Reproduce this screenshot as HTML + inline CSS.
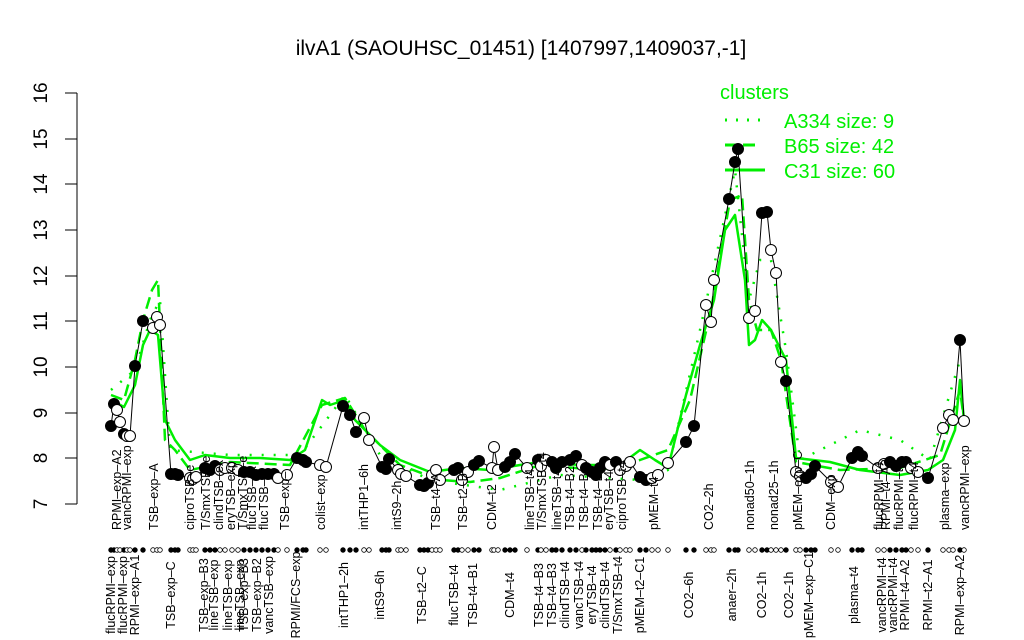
<!DOCTYPE html>
<html><head><meta charset="utf-8"><style>
html,body{margin:0;padding:0;background:#fff;}
svg{display:block;font-family:"Liberation Sans",sans-serif;}
.lb{font-size:12.5px;fill:#000;}
</style></head><body>
<svg id="s" width="1024" height="640" viewBox="0 0 1024 640" xmlns="http://www.w3.org/2000/svg">
<text x="521" y="55" font-size="21" text-anchor="middle">ilvA1 (SAOUHSC_01451) [1407997,1409037,-1]</text>
<g stroke="#000" stroke-width="1">
<line x1="77" y1="93" x2="77" y2="504"/>
<line x1="65" y1="93" x2="77" y2="93"/><line x1="65" y1="139" x2="77" y2="139"/>
<line x1="65" y1="184" x2="77" y2="184"/><line x1="65" y1="230" x2="77" y2="230"/>
<line x1="65" y1="276" x2="77" y2="276"/><line x1="65" y1="321" x2="77" y2="321"/>
<line x1="65" y1="367" x2="77" y2="367"/><line x1="65" y1="413" x2="77" y2="413"/>
<line x1="65" y1="458" x2="77" y2="458"/><line x1="65" y1="504" x2="77" y2="504"/>
</g>
<g font-size="19" text-anchor="middle">
<text transform="translate(47,93) rotate(-90)">16</text>
<text transform="translate(47,139) rotate(-90)">15</text>
<text transform="translate(47,184) rotate(-90)">14</text>
<text transform="translate(47,230) rotate(-90)">13</text>
<text transform="translate(47,276) rotate(-90)">12</text>
<text transform="translate(47,321) rotate(-90)">11</text>
<text transform="translate(47,367) rotate(-90)">10</text>
<text transform="translate(47,413) rotate(-90)">9</text>
<text transform="translate(47,458) rotate(-90)">8</text>
<text transform="translate(47,504) rotate(-90)">7</text>
</g>
<g fill="#00ee00" font-size="20">
<text x="720" y="99">clusters</text>
<text x="784" y="128">A334 size: 9</text>
<text x="784" y="153">B65 size: 42</text>
<text x="784" y="178">C31 size: 60</text>
</g>
<g stroke="#00ee00" stroke-width="3">
<line x1="725" y1="120" x2="760" y2="120" stroke-dasharray="2,9"/>
<line x1="725" y1="145" x2="757" y2="145" stroke-dasharray="12,6"/>
<line x1="725" y1="170" x2="765" y2="170"/>
</g>
<g fill="none" stroke="#00ee00" stroke-width="2.5" stroke-linejoin="round">
<path d="M111 400 L124 407 L135 385 L143 345 L150 330 L158 335 L165 420 L175 440 L190 460 L205 455 L230 458 L260 458 L290 460 L305 450 L322 400 L330 405 L345 400 L355 420 L365 430 L380 445 L400 460 L430 472 L460 468 L490 470 L520 465 L540 462 L580 465 L620 465 L640 450 L655 460 L668 468 L686 395 L700 345 L714 300 L725 230 L735 215 L745 280 L749 345 L755 340 L762 320 L771 330 L781 350 L786 360 L796 458 L830 462 L860 470 L900 475 L928 470 L943 460 L955 430 L960 380 L964 420"/>
<path d="M111 395 L124 400 L135 360 L143 320 L152 290 L158 280 L165 440 L175 450 L190 470 L230 462 L290 465 L322 405 L345 398 L365 430 L400 465 L440 480 L470 482 L500 478 L540 465 L600 470 L640 460 L668 450 L690 400 L711 310 L730 200 L742 195 L749 300 L757 330 L771 330 L781 360 L796 462 L840 470 L900 468 L940 455 L960 390 L964 420" stroke-dasharray="12,6"/>
<path d="M111 390 L135 370 L150 320 L160 300 L170 450 L230 455 L300 455 L345 395 L380 455 L430 480 L500 490 L560 475 L640 480 L668 470 L700 330 L735 170 L749 300 L760 260 L771 260 L786 350 L800 460 L860 430 L900 440 L930 460 L960 360" stroke-dasharray="2,10"/>
</g>
<g id="pts"></g>
<g class="lb">
<text transform="translate(121,530) rotate(-90)">RPMI–exp–A2</text>
<text transform="translate(131,530) rotate(-90)">vancRPMI–exp</text>
<text transform="translate(158,530) rotate(-90)">TSB–exp–A</text>
<text transform="translate(194,530) rotate(-90)">ciproTSB–e</text>
<text transform="translate(210,530) rotate(-90)">T/SmxTSB–e</text>
<text transform="translate(223,530) rotate(-90)">clindTSB–ex</text>
<text transform="translate(235,530) rotate(-90)">eryTSB–exp</text>
<text transform="translate(247,530) rotate(-90)">T/SmxTSB–e</text>
<text transform="translate(256,530) rotate(-90)">flucTSB–ex</text>
<text transform="translate(268,530) rotate(-90)">flucTSB–e</text>
<text transform="translate(289,530) rotate(-90)">TSB–exp–</text>
<text transform="translate(325,530) rotate(-90)">colist–exp</text>
<text transform="translate(368,530) rotate(-90)">intTHP1–6h</text>
<text transform="translate(401,530) rotate(-90)">intS9–2h</text>
<text transform="translate(440,530) rotate(-90)">TSB–t4–A</text>
<text transform="translate(467,530) rotate(-90)">TSB–t2–B</text>
<text transform="translate(496,530) rotate(-90)">CDM–t2</text>
<text transform="translate(534,530) rotate(-90)">lineTSB–t4</text>
<text transform="translate(546,530) rotate(-90)">T/SmxTSB–t4</text>
<text transform="translate(561,530) rotate(-90)">lineTSB–t4</text>
<text transform="translate(574,530) rotate(-90)">TSB–t4–B2</text>
<text transform="translate(588,530) rotate(-90)">TSB–t4–B</text>
<text transform="translate(602,530) rotate(-90)">TSB–t4–B</text>
<text transform="translate(613,530) rotate(-90)">eryTSB–t4</text>
<text transform="translate(626,530) rotate(-90)">ciproTSB–t4</text>
<text transform="translate(658,530) rotate(-90)">pMEM–t4</text>
<text transform="translate(713,530) rotate(-90)">CO2–2h</text>
<text transform="translate(754,530) rotate(-90)">nonad50–1h</text>
<text transform="translate(778,530) rotate(-90)">nonad25–1h</text>
<text transform="translate(802,530) rotate(-90)">pMEM–exp–C</text>
<text transform="translate(835,530) rotate(-90)">CDM–exp</text>
<text transform="translate(883,530) rotate(-90)">flucRPMI–t4</text>
<text transform="translate(890,530) rotate(-90)">RPMI–t4–A2</text>
<text transform="translate(903,530) rotate(-90)">flucRPMI–t4</text>
<text transform="translate(918,530) rotate(-90)">flucRPMI–t4</text>
<text transform="translate(949,530) rotate(-90)">plasma–exp</text>
<text transform="translate(969,530) rotate(-90)">vancRPMI–exp</text>
</g>
<g class="lb" text-anchor="middle">
<text transform="translate(115,595) rotate(-90)">flucRPMI–exp</text>
<text transform="translate(127,595) rotate(-90)">flucRPMI–exp</text>
<text transform="translate(139,595) rotate(-90)">RPMI–exp–A1</text>
<text transform="translate(175,595) rotate(-90)">TSB–exp–C</text>
<text transform="translate(208,595) rotate(-90)">TSB–exp–B3</text>
<text transform="translate(218,595) rotate(-90)">lineTSB–exp</text>
<text transform="translate(232,595) rotate(-90)">lineTSB–exp</text>
<text transform="translate(244,595) rotate(-90)">lineTSB–exp</text>
<text transform="translate(248,595) rotate(-90)">TSB–exp–B3</text>
<text transform="translate(261,595) rotate(-90)">TSB–exp–B2</text>
<text transform="translate(273,595) rotate(-90)">vancTSB–exp</text>
<text transform="translate(300,595) rotate(-90)">RPMI/FCS–exp</text>
<text transform="translate(348,595) rotate(-90)">intTHP1–2h</text>
<text transform="translate(384,595) rotate(-90)">intS9–6h</text>
<text transform="translate(426,595) rotate(-90)">TSB–t2–C</text>
<text transform="translate(458,595) rotate(-90)">flucTSB–t4</text>
<text transform="translate(477,595) rotate(-90)">TSB–t4–B1</text>
<text transform="translate(514,595) rotate(-90)">CDM–t4</text>
<text transform="translate(543,595) rotate(-90)">TSB–t4–B3</text>
<text transform="translate(556,595) rotate(-90)">TSB–t4–B3</text>
<text transform="translate(569,595) rotate(-90)">clindTSB–t4</text>
<text transform="translate(583,595) rotate(-90)">vancTSB–t4</text>
<text transform="translate(596,595) rotate(-90)">eryTSB–t4</text>
<text transform="translate(609,595) rotate(-90)">clindTSB–t4</text>
<text transform="translate(622,595) rotate(-90)">T/SmxTSB–t4</text>
<text transform="translate(644,595) rotate(-90)">pMEM–t2–C1</text>
<text transform="translate(693,595) rotate(-90)">CO2–6h</text>
<text transform="translate(736,595) rotate(-90)">anaer–2h</text>
<text transform="translate(766,595) rotate(-90)">CO2–1h</text>
<text transform="translate(793,595) rotate(-90)">CO2–1h</text>
<text transform="translate(813,595) rotate(-90)">pMEM–exp–C1</text>
<text transform="translate(858,595) rotate(-90)">plasma–t4</text>
<text transform="translate(886,595) rotate(-90)">vancRPMI–t4</text>
<text transform="translate(897,595) rotate(-90)">vancRPMI–t4</text>
<text transform="translate(909,595) rotate(-90)">RPMI–t4–A2</text>
<text transform="translate(932,595) rotate(-90)">RPMI–t2–A1</text>
<text transform="translate(964,595) rotate(-90)">RPMI–exp–A2</text>
</g>
</svg>
<script>
var P=[[111,426,1],[114,404,1],[117,410,0],[120,422,0],[124,434,1],[127,436,0],[130,436,0],[135,366,1],[143,321,1],[153,328,0],[157,317,0],[160,325,0],[171,474,1],[175,474,1],[178,475,1],[190,478,0],[193,479,0],[196,477,0],[205,468,1],[210,470,1],[215,466,1],[220,470,0],[225,468,0],[232,468,0],[238,470,0],[244,472,1],[250,472,1],[256,475,1],[262,474,1],[268,474,1],[274,474,1],[278,478,0],[287,475,0],[297,458,1],[303,460,1],[306,462,1],[320,465,0],[326,467,0],[343,406,1],[350,415,1],[356,432,1],[364,418,0],[369,440,0],[382,467,1],[386,469,1],[389,459,1],[398,470,0],[401,474,0],[406,476,0],[420,485,1],[424,486,1],[428,483,1],[432,475,0],[436,470,0],[440,480,0],[454,470,1],[458,468,1],[462,480,0],[468,472,0],[474,465,1],[479,461,1],[492,468,0],[494,447,0],[498,470,0],[505,467,1],[510,462,1],[515,454,1],[527,468,0],[538,460,1],[541,466,0],[546,460,0],[552,462,1],[556,468,1],[562,462,1],[570,460,1],[576,456,1],[582,465,0],[586,468,1],[592,472,1],[596,475,1],[600,468,1],[605,462,1],[610,465,0],[616,462,1],[620,470,0],[626,466,0],[630,462,0],[640,477,1],[646,480,1],[652,478,0],[658,475,0],[668,463,0],[686,442,1],[694,426,1],[706,305,0],[711,322,0],[714,280,0],[729,199,1],[735,162,1],[738,149,1],[749,318,0],[755,311,0],[762,213,1],[767,212,1],[771,250,0],[776,273,0],[781,362,0],[786,381,1],[796,472,0],[800,476,0],[806,478,1],[811,474,1],[815,466,1],[831,482,0],[838,487,0],[852,458,1],[858,452,1],[862,456,1],[878,468,0],[884,464,0],[890,462,1],[896,466,1],[902,462,1],[906,462,1],[911,468,0],[918,472,0],[928,478,1],[943,428,0],[949,415,0],[953,420,0],[960,340,1],[964,421,0]];
var g=document.getElementById('pts'),ns='http://www.w3.org/2000/svg';
var d='M'+P.map(function(p){return p[0]+' '+p[1]}).join(' L');
var pa=document.createElementNS(ns,'path');pa.setAttribute('d',d);pa.setAttribute('fill','none');pa.setAttribute('stroke','#000');pa.setAttribute('stroke-width','1');g.appendChild(pa);
P.forEach(function(p){var c=document.createElementNS(ns,'circle');c.setAttribute('cx',p[0]);c.setAttribute('cy',p[1]);c.setAttribute('r',5.5);c.setAttribute('fill',p[2]?'#000':'#fff');c.setAttribute('stroke','#000');g.appendChild(c);
var e=document.createElementNS(ns,'circle');e.setAttribute('cx',p[0]);e.setAttribute('cy',550);e.setAttribute('r',2.3);e.setAttribute('fill',p[2]?'#000':'#fff');e.setAttribute('stroke','#000');e.setAttribute('stroke-width','0.8');g.appendChild(e);});
</script>
</body></html>
